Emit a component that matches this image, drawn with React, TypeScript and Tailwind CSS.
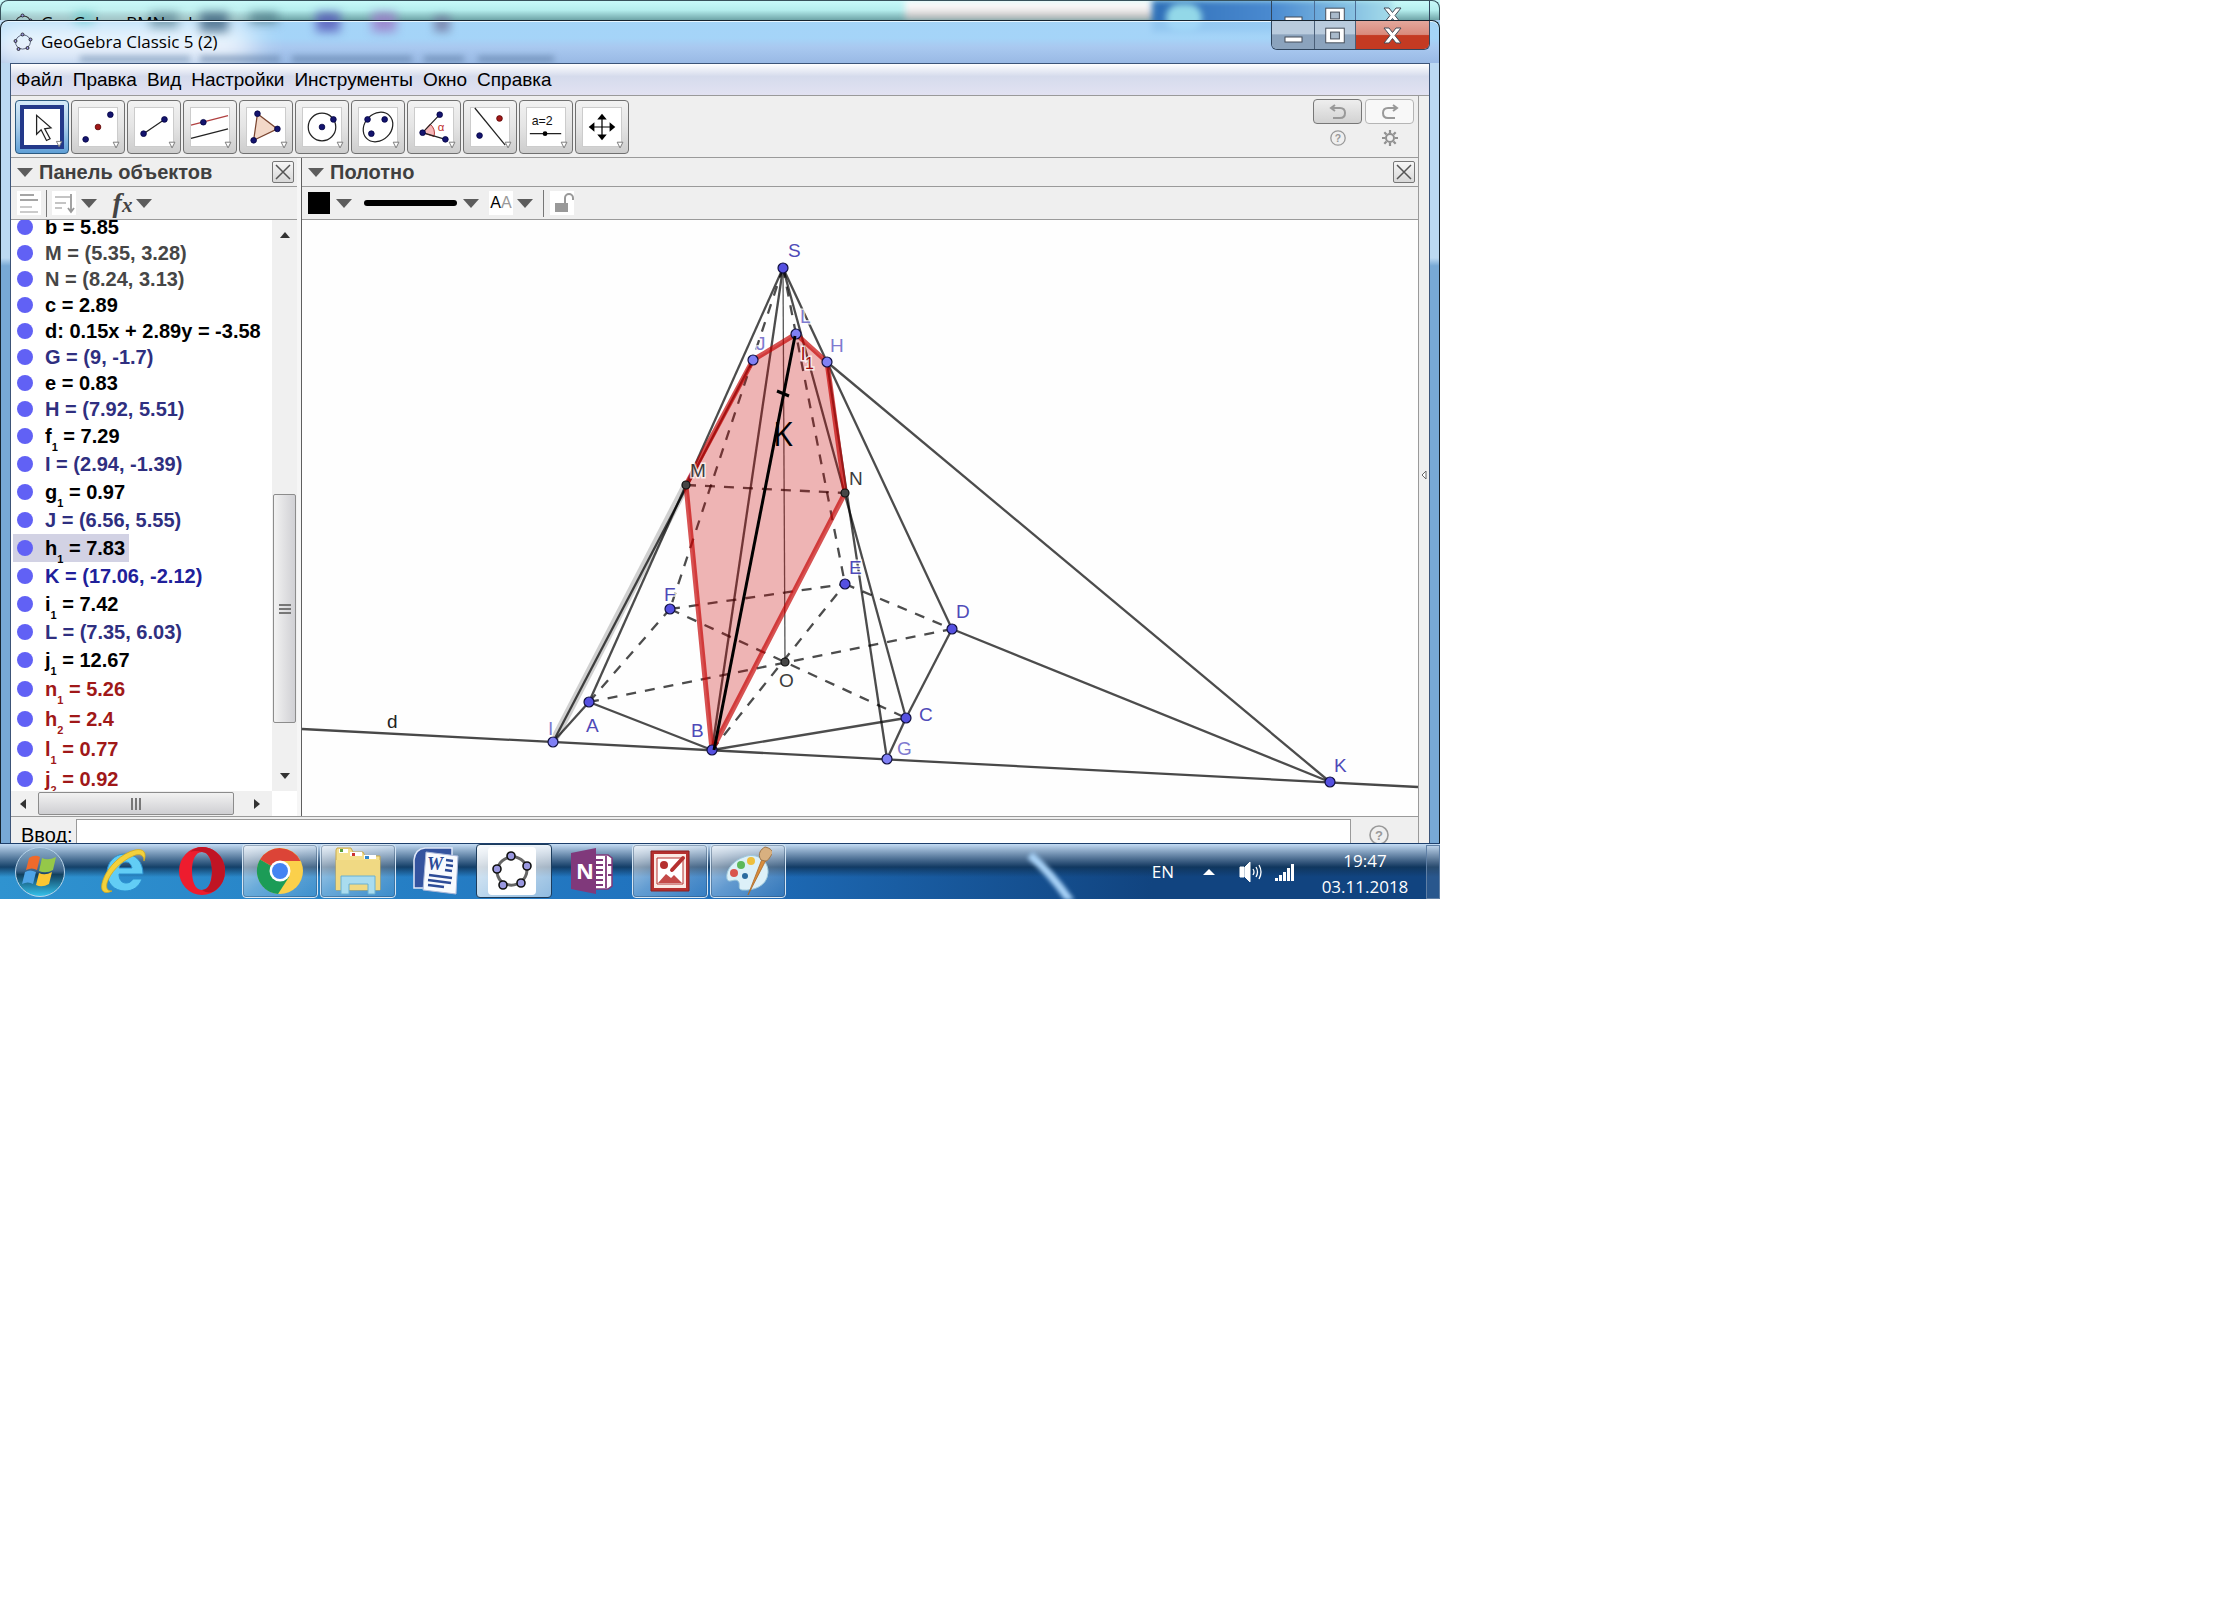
import React, { FC, ReactNode } from "react";

type Point = { name: string; x: number; y: number; lx: number; ly: number; kind: "free" | "path" | "dep" };
type Row = { name: string; sub?: string; value: string; color: string; selected?: boolean; size: string };

const NAVY = "#14146e";
const MENU = ["Файл", "Правка", "Вид", "Настройки", "Инструменты", "Окно", "Справка"];

const COLORS = {
    black: "text-black",
    gray: "text-[#464646]",
    blue: "text-[#2f2f80]",
    deep: "text-[#20209a]",
    red: "text-[#a01818]",
};

const SIZES = { short: "h-[26px]", sub: "h-[28px]", tall: "h-[30px]" };

const ROWS: Row[] = [
    { name: "b", value: " = 5.85", color: COLORS.black, size: SIZES.short },
    { name: "M", value: " = (5.35, 3.28)", color: COLORS.gray, size: SIZES.short },
    { name: "N", value: " = (8.24, 3.13)", color: COLORS.gray, size: SIZES.short },
    { name: "c", value: " = 2.89", color: COLORS.black, size: SIZES.short },
    { name: "d", value: ": 0.15x + 2.89y = -3.58", color: COLORS.black, size: SIZES.short },
    { name: "G", value: " = (9, -1.7)", color: COLORS.blue, size: SIZES.short },
    { name: "e", value: " = 0.83", color: COLORS.black, size: SIZES.short },
    { name: "H", value: " = (7.92, 5.51)", color: COLORS.blue, size: SIZES.short },
    { name: "f", sub: "1", value: " = 7.29", color: COLORS.black, size: SIZES.sub },
    { name: "I", value: " = (2.94, -1.39)", color: COLORS.blue, size: SIZES.sub },
    { name: "g", sub: "1", value: " = 0.97", color: COLORS.black, size: SIZES.sub },
    { name: "J", value: " = (6.56, 5.55)", color: COLORS.blue, size: SIZES.sub },
    { name: "h", sub: "1", value: " = 7.83", color: COLORS.black, size: SIZES.sub, selected: true },
    { name: "K", value: " = (17.06, -2.12)", color: COLORS.deep, size: SIZES.sub },
    { name: "i", sub: "1", value: " = 7.42", color: COLORS.black, size: SIZES.sub },
    { name: "L", value: " = (7.35, 6.03)", color: COLORS.blue, size: SIZES.sub },
    { name: "j", sub: "1", value: " = 12.67", color: COLORS.black, size: SIZES.sub },
    { name: "n", sub: "1", value: " = 5.26", color: COLORS.red, size: SIZES.tall },
    { name: "h", sub: "2", value: " = 2.4", color: COLORS.red, size: SIZES.tall },
    { name: "l", sub: "1", value: " = 0.77", color: COLORS.red, size: SIZES.tall },
    { name: "j", sub: "2", value: " = 0.92", color: COLORS.red, size: SIZES.tall },
];

const POINTS: Point[] = [
    { name: "S", x: 783, y: 268, lx: 788, ly: 257, kind: "free" },
    { name: "L", x: 796, y: 334, lx: 800, ly: 323, kind: "path" },
    { name: "J", x: 753, y: 360, lx: 756, ly: 350, kind: "path" },
    { name: "H", x: 827, y: 362, lx: 830, ly: 352, kind: "path" },
    { name: "M", x: 686, y: 485, lx: 690, ly: 477, kind: "dep" },
    { name: "N", x: 845, y: 493, lx: 849, ly: 485, kind: "dep" },
    { name: "F", x: 670, y: 609, lx: 664, ly: 601, kind: "free" },
    { name: "E", x: 845, y: 584, lx: 849, ly: 574, kind: "free" },
    { name: "D", x: 952, y: 629, lx: 956, ly: 618, kind: "free" },
    { name: "O", x: 785, y: 662, lx: 779, ly: 687, kind: "dep" },
    { name: "A", x: 589, y: 702, lx: 586, ly: 732, kind: "free" },
    { name: "I", x: 553, y: 742, lx: 548, ly: 735, kind: "path" },
    { name: "B", x: 712, y: 750, lx: 691, ly: 737, kind: "free" },
    { name: "C", x: 906, y: 718, lx: 919, ly: 721, kind: "free" },
    { name: "G", x: 887, y: 759, lx: 897, ly: 755, kind: "path" },
    { name: "K", x: 1330, y: 782, lx: 1334, ly: 772, kind: "free" },
];

const POINT_FILL = { free: "#5550e0", path: "#8080f5", dep: "#464646" };
const LABEL_FILL = { free: "#4f4ab8", path: "#7f7ad0", dep: "#3c3c3c" };

const SOLID = ["SA", "SB", "SC", "SD", "AB", "BC", "CD", "CG", "AI", "JI", "HG", "DK", "HK"];
const DASHED = ["SF", "SE", "FE", "ED", "AF", "AD", "BE", "FC", "MN"];

const at = (name: string) => POINTS.find((p) => p.name === name) as Point;

const Edge: FC<{ ends: string; dashed?: boolean }> = ({ ends, dashed }) => {
    const a = at(ends[0]);
    const b = at(ends[1]);
    return (
        <line
            x1={a.x}
            y1={a.y}
            x2={b.x}
            y2={b.y}
            stroke="#000"
            strokeOpacity="0.7"
            strokeWidth="2.3"
            strokeDasharray={dashed ? "10 9" : undefined}
        />
    );
};

const Construction: FC = () => (
    <svg viewBox="302 220 1116 596" className="block w-full bg-[#fefefe]" fontFamily="Liberation Sans, Arial, sans-serif">
        <line x1="302" y1="729" x2="1418" y2="787" stroke="#484848" strokeWidth="2.3" />
        <line x1="553" y1="742" x2="686" y2="485" stroke="#000" strokeOpacity="0.18" strokeWidth="8" />
        {SOLID.map((e) => (
            <Edge key={e} ends={e} />
        ))}
        <line x1="783" y1="268" x2="785" y2="662" stroke="#555" strokeWidth="1.3" />
        {DASHED.map((e) => (
            <Edge key={e} ends={e} dashed />
        ))}
        <polygon
            points="712,750 686,485 753,360 796,334 827,362 845,493"
            fill="#c80000"
            fillOpacity="0.29"
            stroke="#c40000"
            strokeOpacity="0.68"
            strokeWidth="5"
            strokeLinejoin="round"
        />
        {POINTS.map((p) => (
            <circle
                key={p.name}
                cx={p.x}
                cy={p.y}
                r={p.kind === "dep" ? 4 : 5}
                fill={POINT_FILL[p.kind]}
                stroke={p.kind === "dep" ? "#111" : "#101040"}
                strokeWidth="1.2"
            />
        ))}
        <g fontSize="19" stroke="#fff" strokeWidth="3" strokeOpacity="0.75" paintOrder="stroke">
            {POINTS.map((p) => (
                <text key={p.name} x={p.lx} y={p.ly} fill={LABEL_FILL[p.kind]}>
                    {p.name}
                </text>
            ))}
            <text x="387" y="728" fill="#222">
                d
            </text>
            <text x="801" y="360" fill="#a01010">
                l
            </text>
            <text x="805" y="369" fill="#a01010" fontSize="16">
                1
            </text>
        </g>
        <g stroke="#000" strokeWidth="3">
            <path d="M795 336 L714 750" />
            <path d="M777 391 L789 396" />
        </g>
        <text x="773" y="446" fontSize="32" fontFamily="Open Sans, sans-serif">
            K
        </text>
    </svg>
);

const Dot: FC<{ x: number; y: number; red?: boolean }> = ({ x, y, red }) => (
    <circle cx={x} cy={y} r="3" fill={red ? "#a01818" : NAVY} stroke={red ? "#500" : "#000040"} strokeWidth="0.8" />
);

const TOOLS: { label: string; icon: ReactNode }[] = [
    {
        label: "Перемещать",
        icon: <path d="M14 7v21l5-5 6 12 4-2-6-11 7-1z" fill="#fff" stroke="#222" strokeWidth="1.4" />,
    },
    {
        label: "Точка",
        icon: (
            <>
                <Dot x={7} y={33} />
                <Dot x={20} y={20} red />
                <Dot x={33} y={7} />
            </>
        ),
    },
    {
        label: "Отрезок",
        icon: (
            <>
                <path d="M9 27 31 12" stroke="#222" strokeWidth="1.3" />
                <Dot x={9} y={27} />
                <Dot x={31} y={12} />
            </>
        ),
    },
    {
        label: "Параллельная прямая",
        icon: (
            <>
                <path d="M0 18 39 8" stroke="#b04040" strokeWidth="1.3" />
                <path d="M0 32 39 22" stroke="#222" strokeWidth="1.3" />
                <Dot x={13} y={15} />
            </>
        ),
    },
    {
        label: "Многоугольник",
        icon: (
            <>
                <path d="M11 6 32 22 7 34z" fill="#f3d8c8" stroke="#7a4530" strokeWidth="1.3" />
                <Dot x={11} y={6} />
                <Dot x={32} y={22} />
                <Dot x={7} y={34} />
            </>
        ),
    },
    {
        label: "Окружность",
        icon: (
            <>
                <circle cx="20" cy="20" r="14.5" fill="none" stroke="#222" strokeWidth="1.3" />
                <Dot x={20} y={20} />
                <Dot x={32} y={12} />
            </>
        ),
    },
    {
        label: "Эллипс",
        icon: (
            <>
                <ellipse cx="20" cy="20" rx="17" ry="14" fill="none" stroke="#222" strokeWidth="1.3" transform="rotate(-45 20 20)" />
                <Dot x={9} y={12} />
                <Dot x={27} y={12} />
                <Dot x={13} y={27} />
            </>
        ),
    },
    {
        label: "Угол",
        icon: (
            <>
                <path d="M8 26 16 17A13 13 0 0 1 20 30z" fill="#f7b8b8" stroke="#b03030" />
                <path d="M26 7 8 26 32 33" fill="none" stroke="#222" strokeWidth="1.3" />
                <text x="24" y="24" fontSize="12" fill="#c03030">
                    α
                </text>
                <Dot x={26} y={7} />
                <Dot x={8} y={26} />
                <Dot x={32} y={33} />
            </>
        ),
    },
    {
        label: "Отражение",
        icon: (
            <>
                <path d="M4 0 36 39" stroke="#222" strokeWidth="1.3" />
                <Dot x={30} y={11} red />
                <Dot x={9} y={29} />
            </>
        ),
    },
    {
        label: "Ползунок",
        icon: (
            <>
                <text x="5" y="18" fontSize="13" fill="#111">
                    a=2
                </text>
                <path d="M3 27H36" stroke="#222" strokeWidth="1.3" />
                <circle cx="19" cy="27" r="2.5" />
            </>
        ),
    },
    {
        label: "Переместить чертёж",
        icon: (
            <>
                <path d="M20 10V30M10 20H30" stroke="#000" strokeWidth="1.3" />
                <path d="M20 6l5 6H15zM20 34l5-6H15zM6 20l6-5v10zM34 20l-6-5v10z" />
            </>
        ),
    },
];

const Tool: FC<{ label: string; icon: ReactNode; active?: boolean }> = ({ label, icon, active }) => (
    <button
        aria-label={label}
        className={
            active
                ? "flex h-[54px] w-[54px] items-center justify-center rounded border border-[#2c5a80] bg-linear-to-b from-[#d6eaf8] via-[#a8cdea] to-[#5f9fd6]"
                : "flex h-[54px] w-[54px] items-center justify-center rounded border border-[#707070] bg-linear-to-b from-[#f2f2f2] via-[#e4e4e4] to-[#cdcdcd]"
        }
    >
        <svg
            viewBox="0 0 40 40"
            className={active ? "h-11 w-11 overflow-visible border-4 border-[#23398a] bg-white" : "h-10 w-10 overflow-visible border border-[#ccc] bg-white"}
            fontFamily="Liberation Sans, sans-serif"
        >
            {icon}
            <path d="M36 36H42L39 42z" fill="#fff" stroke="#777" />
        </svg>
    </button>
);

const Caret: FC = () => (
    <svg viewBox="0 0 16 9" className="h-[9px] w-4 shrink-0" fill="#5c5c5c">
        <path d="M0 0h16L8 9z" />
    </svg>
);

const CloseView: FC = () => (
    <button aria-label="Закрыть" className="h-[22px] w-[22px] rounded-xs border border-[#777] bg-linear-to-b from-[#f6f6f6] to-[#d8d8d8]">
        <svg viewBox="0 0 20 20" className="h-5 w-5" stroke="#555" strokeWidth="1.5">
            <path d="M3 3 17 17M17 3 3 17" />
        </svg>
    </button>
);

const ViewHeader: FC<{ title: string }> = ({ title }) => (
    <header className="flex h-[29px] items-center justify-between border-b border-[#9a9a9a] pr-[3px] pl-1.5">
        <div className="flex items-center gap-1.5">
            <Caret />
            <h2 className="text-[20px] leading-6 font-bold text-[#404040]">{title}</h2>
        </div>
        <CloseView />
    </header>
);

const Pentagon: FC<{ className: string; stroke: string; width: number; r: number }> = ({ className, stroke, width, r }) => (
    <svg viewBox="0 0 40 40" className={className}>
        <ellipse cx="20" cy="20" rx="15" ry="14" fill="none" stroke={stroke} strokeWidth={width} transform="rotate(-20 20 20)" />
        {[
            [19, 5],
            [35, 15],
            [29, 32],
            [11, 34],
            [5, 18],
        ].map(([x, y]) => (
            <circle key={x} cx={x} cy={y} r={r} fill="#9a98e0" stroke="#111" strokeWidth="1.6" />
        ))}
    </svg>
);

const Caption: FC<{ ghost?: boolean }> = ({ ghost }) => (
    <div className="flex h-[29px] overflow-hidden rounded-b-md border border-t-0 border-[#30465e] text-white">
        <button
            aria-label="Свернуть"
            className={ghost ? "w-[43px] border-r border-[#4d6f98]" : "w-[43px] border-r border-[#4a5f78] bg-linear-to-b from-[#b9cbdd] from-45% to-[#8ba3bd] to-50%"}
        >
            <svg viewBox="0 0 43 29" className="h-[29px] w-[43px]">
                <rect x="13" y="16" width="17" height="5" fill="#fff" stroke="#444c58" />
            </svg>
        </button>
        <button
            aria-label="Развернуть"
            className={ghost ? "w-[41px] border-r border-[#4d6f98]" : "w-[41px] border-r border-[#4a5f78] bg-linear-to-b from-[#b9cbdd] from-45% to-[#8ba3bd] to-50%"}
        >
            <svg viewBox="0 0 41 29" className="h-[29px] w-10" stroke="#444c58">
                <rect x="11" y="7" width="19" height="15" fill="#fff" />
                <rect x="16" y="11" width="9" height="7" fill="#a9bacb" />
            </svg>
        </button>
        <button
            aria-label="Закрыть окно"
            className={ghost ? "w-[73px]" : "w-[73px] bg-linear-to-b from-[#e3a79c] via-[#d98a7c] via-48% to-[#c43a22] to-52%"}
        >
            <svg viewBox="0 0 73 29" className="h-[29px] w-[73px]">
                <path d="M28 7h5l3.500 4.500L40 7h5l-6 7.500 6 7.500h-5l-3.500-4.500L33 22h-5l6-7.500z" fill="#fff" stroke="#444c58" />
            </svg>
        </button>
    </div>
);

/* glass glow of the windows underneath */
const Glass: FC = () => (
    <div aria-hidden className="pointer-events-none absolute inset-x-0 top-0 h-16 overflow-hidden">
        <div className="absolute inset-x-0 top-0 h-5 bg-linear-to-b from-[#c9fbfb] via-[#b5eeee] to-[#6fa5a8]" />
        <div className="absolute top-0 left-[905px] h-5 w-[250px] bg-linear-to-b from-white via-[#f4f2f2] to-[#a5a5a5] blur-[3px]" />
        <div className="absolute top-0 left-[1152px] h-8 w-[240px] bg-linear-to-r from-[#2f6fb8] via-[#4a8ad0] to-[#a5dcea] blur-[3px]" />
        <div className="absolute top-1 left-[1166px] h-7 w-9 rounded-full bg-[#93d8e8] blur-[3px]" />
        <div className="absolute inset-x-0 top-[21px] h-[43px] bg-linear-to-b from-[#a4d6fa]/85 from-40% via-[#a9c9f0] via-60% to-[#98b8e4]" />
        <div className="absolute top-6 -left-2 h-10 w-[260px] bg-white/90 blur-lg" />
        <div className="absolute top-3 left-[74px] h-3 w-5 bg-[#5fc8cc]/60 blur-[5px]" />
        <div className="absolute top-3 left-[150px] h-4 w-7 bg-[#4f7888]/60 blur-[5px]" />
        <div className="absolute top-3 left-[200px] h-5 w-7 bg-[#2f5573]/70 blur-[5px]" />
        <div className="absolute top-3 left-[250px] h-3 w-7 bg-[#3f6a7a]/60 blur-[5px]" />
        <div className="absolute top-3 left-[316px] h-5 w-6 bg-[#5558b8]/80 blur-[5px]" />
        <div className="absolute top-3 left-[372px] h-5 w-6 bg-[#9a7cc8]/80 blur-[5px]" />
        <div className="absolute top-4 left-[434px] h-4 w-4 bg-[#6d6f98]/70 blur-[4px]" />
        <div className="absolute top-[56px] left-[80px] h-1.5 w-[110px] bg-[#56779d]/50 blur-[3px]" />
        <div className="absolute top-[56px] left-[200px] h-1.5 w-20 bg-[#56779d]/60 blur-[3px]" />
        <div className="absolute top-[56px] left-[292px] h-1.5 w-[120px] bg-[#56779d]/60 blur-[3px]" />
        <div className="absolute top-[56px] left-[424px] h-1.5 w-10 bg-[#56779d]/60 blur-[3px]" />
        <div className="absolute top-[56px] left-[478px] h-1.5 w-[76px] bg-[#56779d]/60 blur-[3px]" />
    </div>
);

const ObjectsPanel: FC = () => (
    <aside className="flex w-[286px] shrink-0 flex-col">
        <ViewHeader title="Панель объектов" />
        <div className="flex h-[33px] items-center border-b border-[#9a9a9a] pl-1.5">
            <button aria-label="Вспомогательные объекты" className="bg-white">
                <svg viewBox="0 0 24 24" className="h-6 w-6" strokeWidth="1.6">
                    <path d="M3 4h14M3 9h18" stroke="#888" />
                    <path d="M3 16h12M3 21h18" stroke="#bbb" />
                </svg>
            </button>
            <span className="mx-[5px] h-[27px] w-px bg-[#777]" />
            <button aria-label="Сортировать" className="flex items-center gap-[5px]">
                <svg viewBox="0 0 24 24" className="h-6 w-6 bg-white" fill="none" strokeWidth="1.8">
                    <path d="M3 6h15M3 12h11M3 17h7" stroke="#c4c4c4" />
                    <path d="M19 3v17M16 17l3 4 3-4" stroke="#999" />
                </svg>
                <Caret />
            </button>
            <button aria-label="Описание" className="ml-3 flex items-center">
                <span className="w-[27px] text-[28px] leading-6 font-bold text-[#444] italic font-['Liberation_Serif',serif]">
                    f<sub className="bottom-0 text-[21px]">x</sub>
                </span>
                <Caret />
            </button>
        </div>
        <div className="flex h-0 grow bg-white">
            <ul className="-mt-1.5 h-[calc(100%+6px)] grow overflow-hidden [clip-path:inset(6px_0_0_0)]">
                {ROWS.map((row) => (
                    <li key={row.name + (row.sub ?? "")} className={`flex ${row.size}`}>
                        <div className={`ml-0.5 flex items-center gap-3 pr-1 pl-1 ${row.color} ${row.selected ? "bg-[#d2d2e4]" : ""}`}>
                            <span className="h-4 w-4 rounded-full bg-[#6161f5]" />
                            <span className="text-[20px] leading-6 font-bold whitespace-pre">
                                {row.name}
                                {row.sub && <sub className="-bottom-2 text-[11px]">{row.sub}</sub>}
                                {row.value}
                            </span>
                        </div>
                    </li>
                ))}
            </ul>
            <div className="flex w-[25px] flex-col items-center bg-[#f0f0f0] pt-3">
                <svg viewBox="0 0 10 6" className="h-1.5 w-2.5" fill="#333">
                    <path d="M0 6h10L5 0z" />
                </svg>
                <div className="mt-auto flex h-[229px] w-[23px] flex-col items-center justify-center gap-0.5 rounded-xs border border-[#8c8c8c] bg-linear-to-r from-[#f2f2f2] to-[#d0d0d4]">
                    <span className="h-0.5 w-3 bg-[#777]" />
                    <span className="h-0.5 w-3 bg-[#777]" />
                    <span className="h-0.5 w-3 bg-[#777]" />
                </div>
                <svg viewBox="0 0 10 6" className="mt-[50px] mb-3 h-1.5 w-2.5" fill="#333">
                    <path d="M0 0h10L5 6z" />
                </svg>
            </div>
        </div>
        <div className="flex h-[25px] bg-white">
            <div className="flex grow items-center bg-[#f0f0f0] pl-[9px]">
                <svg viewBox="0 0 6 10" className="h-2.5 w-1.5" fill="#333">
                    <path d="M6 0v10L0 5z" />
                </svg>
                <div className="ml-3 flex h-[23px] w-[196px] items-center justify-center gap-0.5 rounded-xs border border-[#8c8c8c] bg-linear-to-b from-[#f2f2f2] to-[#cfcfd2]">
                    <span className="h-3 w-0.5 bg-[#777]" />
                    <span className="h-3 w-0.5 bg-[#777]" />
                    <span className="h-3 w-0.5 bg-[#777]" />
                </div>
                <svg viewBox="0 0 6 10" className="ml-5 h-2.5 w-1.5" fill="#333">
                    <path d="M0 0v10l6-5z" />
                </svg>
            </div>
            <div className="w-[25px]" />
        </div>
    </aside>
);

const CanvasPanel: FC = () => (
    <section className="min-w-0 grow">
        <ViewHeader title="Полотно" />
        <div className="flex h-[33px] items-center border-b border-[#9a9a9a] pl-1.5">
            <button aria-label="Цвет" className="flex items-center gap-1.5">
                <span className="h-[22px] w-[22px] bg-black" />
                <Caret />
            </button>
            <button aria-label="Стиль линии" className="ml-3 flex items-center gap-1.5">
                <span className="h-1.5 w-[93px] rounded-full bg-black" />
                <Caret />
            </button>
            <button aria-label="Размер текста" className="ml-2.5 flex items-center gap-1 text-[17px] leading-6">
                <span className="flex h-6 w-6 items-center justify-center bg-white text-[16px]">
                    <span>A</span>
                    <span className="text-[#999]">A</span>
                </span>
                <Caret />
            </button>
            <span className="mr-1.5 ml-2.5 h-[27px] w-px bg-[#777]" />
            <button aria-label="Закрепить" className="bg-white">
                <svg viewBox="0 0 24 24" className="h-6 w-6">
                    <rect x="5" y="12" width="13" height="9" fill="#999" />
                    <path d="M15 12V7a4 4 0 0 1 8 0v2" fill="none" stroke="#999" strokeWidth="2" />
                </svg>
            </button>
        </div>
        <Construction />
    </section>
);

const HelpMark: FC<{ className: string }> = ({ className }) => (
    <svg viewBox="0 0 20 20" className={className}>
        <circle cx="10" cy="10" r="9" fill="none" stroke="#999" strokeWidth="1.6" />
        <text x="10" y="15" fontSize="13" fontWeight="bold" textAnchor="middle" fill="#999" fontFamily="Liberation Sans, sans-serif">
            ?
        </text>
    </svg>
);

const APPS: { label: string; open?: boolean; current?: boolean; icon: ReactNode }[] = [
    {
        label: "Internet Explorer",
        icon: (
            <svg viewBox="0 0 48 48" className="h-12 w-12" fill="none">
                <path
                    d="M43 27H19c0 6 3 9 7 9 3 0 5-1 7-4h9c-3 8-9 12-17 12C14 44 7 36 7 26S14 7 25 7s18 8 18 20zM19 21h13c-1-4-3-6-6-6s-6 2-7 6z"
                    fill="#62cdf5"
                    stroke="#2b8fcf"
                    fillRule="evenodd"
                />
                <path
                    d="M12 44C4 48-1 44 3 33 8 19 22 6 35 3c9-2 12 3 9 11 0-6-4-8-11-5C21 14 10 26 7 36c-1 5 0 8 5 8z"
                    fill="#f3d13c"
                    stroke="#d3a81c"
                    strokeWidth="0.8"
                />
            </svg>
        ),
    },
    {
        label: "Opera",
        icon: (
            <svg viewBox="0 0 48 50" className="h-[50px] w-12">
                <path d="M24 1a23 24 0 1 0 0 48 23 24 0 1 0 0-48zm0 5c7 0 10 9 10 19s-3 19-10 19-10-9-10-19S17 6 24 6z" fill="#ee1c2e" fillRule="evenodd" />
                <path d="M24 1c-5 0-9 2-12 5q5-2 12 0c7 0 10 9 10 19s-3 19-10 19q7 5 14 0 9-7 9-19T38 6q-6-5-14-5z" fill="#c01424" />
            </svg>
        ),
    },
    {
        label: "Google Chrome",
        open: true,
        icon: (
            <svg viewBox="0 0 48 48" className="h-12 w-12">
                <circle cx="24" cy="24" r="23" fill="#fbd04b" />
                <path d="M24 24 4 12.500A23 23 0 0 1 44.500 14z" fill="#dc4437" />
                <path d="M24 24 4 12.500A23 23 0 0 0 22 47l11-17z" fill="#1c9c57" />
                <path d="M24 14H44.500L40 30 24 24z" fill="#fbd04b" />
                <circle cx="24" cy="24" r="10.500" fill="#fff" />
                <circle cx="24" cy="24" r="8" fill="#4484f3" />
            </svg>
        ),
    },
    {
        label: "Проводник",
        open: true,
        icon: (
            <svg viewBox="0 0 48 50" className="h-[50px] w-12">
                <path d="M3 2h14l2 4h10l2 4h15v34H2V4z" fill="#f4e08e" stroke="#c9a94d" />
                <path d="M5 3h9v4H5z" fill="#fff" />
                <path d="M16 6h12v4H16zM30 9h12v4H30z" fill="#fff" />
                <path d="M6 3h3v3H6z" fill="#5aa03c" />
                <path d="M18 7h3v3h-3z" fill="#c33" />
                <path d="M31 10h4v3h-4z" fill="#38c" />
                <path d="M2 14h44v30H2z" fill="#f0d983" />
                <path d="M7 30h34v18h-7V38H15v10H7z" fill="#a9dcef" stroke="#6bb0d0" />
            </svg>
        ),
    },
    {
        label: "Microsoft Word",
        icon: (
            <svg viewBox="0 0 48 50" className="h-[50px] w-12">
                <path d="M2 42V14Q3 3 13 2h27v40z" fill="#33539f" stroke="#dfe8f8" strokeWidth="1.5" />
                <path d="M14 6 46 10 44 48 11 44z" fill="#f8fafe" stroke="#a9b8da" />
                <text x="15" y="24" fontSize="18" fontWeight="bold" fontStyle="italic" fill="#2c4b97" fontFamily="Liberation Serif, serif">
                    W
                </text>
                <path d="M34 14l7 1M34 19l7 1M33 24l7 1M17 29l23 3M16 34l23 3M16 39l16 2" stroke="#2c4b97" strokeWidth="2.500" />
            </svg>
        ),
    },
    {
        label: "GeoGebra",
        open: true,
        current: true,
        icon: (
            <span className="flex h-12 w-12 items-center justify-center rounded-sm bg-white">
                <Pentagon className="h-10 w-10" stroke="#666" width={3} r={4} />
            </span>
        ),
    },
    {
        label: "OneNote",
        icon: (
            <svg viewBox="0 0 44 48" className="h-12 w-11">
                <path d="M24 8h14l4 3v28l-4 3H24z" fill="#fff" stroke="#80397b" strokeWidth="1.5" />
                <path d="M25 13h8M25 18h8M25 23h8M25 28h8M25 33h8M25 38h8M38 18h4M38 28h4M36 9v32" stroke="#80397b" strokeWidth="1.800" />
                <path d="M1 6 26 1v46L1 42z" fill="#80397b" />
                <text x="6" y="32" fontSize="22" fontWeight="bold" fill="#fff" fontFamily="Open Sans, sans-serif">
                    N
                </text>
            </svg>
        ),
    },
    {
        label: "Picture Manager",
        open: true,
        icon: (
            <svg viewBox="0 0 40 42" className="h-[42px] w-10">
                <path d="M1 1h38v40H1z" fill="#b5302f" stroke="#8d1f20" />
                <path d="M4 4h32v34H4z" fill="#fbe9e4" />
                <path d="M7 8h26v26H7z" fill="#fff" stroke="#b5302f" />
                <circle cx="14" cy="15" r="4" fill="#b5302f" />
                <path d="M22 20 33 8" stroke="#b5302f" strokeWidth="4" strokeLinecap="round" />
                <path d="M8 33l8-9 5 4 3-3 8 8z" fill="#c44a48" />
            </svg>
        ),
    },
    {
        label: "Paint",
        open: true,
        icon: (
            <svg viewBox="0 0 48 50" className="h-[50px] w-12">
                <path d="M20 11C32 6 45 14 44 27 43 40 30 45 18 44c-5-1-1-6-4-9-4-3-9 3-11-2C1 24 10 14 20 11z" fill="#dcf0f8" stroke="#9cc8dc" />
                <circle cx="10" cy="27" r="4" fill="#d9544d" />
                <circle cx="17" cy="19" r="4" fill="#5cb85a" />
                <circle cx="27" cy="15" r="4" fill="#eebf3d" />
                <circle cx="21" cy="30" r="3" fill="#2b6b9f" />
                <path d="M24 49 38 13l4 1z" fill="#d98d3c" stroke="#a8682a" strokeWidth="0.800" />
                <path d="M37 14c-4-6 0-11 4-13 6 1 8 5 8 6-3 3-4 8-8 8z" fill="#d8b080" stroke="#9c7448" />
            </svg>
        ),
    },
];

const Taskbar: FC = () => (
    <footer className="relative flex h-14 overflow-hidden border-t border-[#1d3f6c] bg-linear-to-r from-[#2f93d0] via-[#1f6fbc] via-50% to-[#114480] to-80% text-white font-['Open_Sans',sans-serif]">
        <div aria-hidden className="absolute inset-0 bg-linear-to-b from-[#c4dcf4] via-[#103458]/85 via-42% to-transparent to-60%" />
        <svg aria-hidden viewBox="0 0 60 56" className="absolute left-[1022px] h-14 w-[60px] blur-[2px]">
            <path d="M8 11Q28 28 49 58" fill="none" stroke="#a9d3f8" strokeWidth="8" />
        </svg>
        <button aria-label="Пуск" className="relative flex w-[86px] shrink-0 items-center pl-[14px]">
            <svg viewBox="0 0 52 52" className="h-[52px] w-[52px]">
                <defs>
                    <linearGradient id="orb" x2="0" y2="1">
                        <stop offset="0" stopColor="#8fb0cc" />
                        <stop offset="0.48" stopColor="#3a6288" />
                        <stop offset="0.55" stopColor="#12405f" />
                        <stop offset="1" stopColor="#35c4ee" />
                    </linearGradient>
                </defs>
                <circle cx="26" cy="26" r="24.500" fill="url(#orb)" stroke="#b8d4ea" />
                <path d="M15 12q6-4 11-1l-3 13q-5-3-11 0z" fill="#ef6a2c" />
                <path d="M28 12q6 3 14-1l-3 13q-7 4-14 1z" fill="#95c849" />
                <path d="M11 26q5-3 11 0l-3 12q-5-3-11 0z" fill="#4ea4e6" />
                <path d="M25 27q6 3 13-1l-3 12q-7 4-13 1z" fill="#fbc733" />
            </svg>
        </button>
        <nav className="relative flex gap-0.5">
            {APPS.map((app) => (
                <button
                    key={app.label}
                    aria-label={app.label}
                    className={`flex h-[54px] w-[76px] items-center justify-center ${
                        app.current
                            ? "rounded-sm border border-[#1c3c5c] bg-linear-to-br from-white/90 to-white/50 pr-1"
                            : app.open
                              ? "rounded-sm border border-[#d5e6f5] bg-linear-to-br from-white/70 via-white/30 to-white/10 outline -outline-offset-2 outline-[#26456a]/40"
                              : ""
                    }`}
                >
                    {app.icon}
                </button>
            ))}
        </nav>
        <div className="relative ml-auto flex items-center">
            <button className="text-[17px] leading-6">EN</button>
            <button aria-label="Скрытые значки" className="ml-[29px]">
                <svg viewBox="0 0 12 6" className="h-1.5 w-3" fill="#fff">
                    <path d="M0 6h12L6 0z" />
                </svg>
            </button>
            <button aria-label="Громкость" className="ml-6">
                <svg viewBox="0 0 24 22" className="h-[22px] w-6" fill="none" stroke="#fff">
                    <path d="M1 6h4v10H1zM6 6l5-5v20l-5-5z" fill="#fff" />
                    <path d="M14 8q2 3 0 6M17 6q3 5 0 10M20 4q4 7 0 14" strokeWidth="1.300" />
                </svg>
            </button>
            <button aria-label="Сеть" className="ml-3">
                <svg viewBox="0 0 20 18" className="h-[18px] w-5" fill="#fff">
                    <path d="M0 15h3v3H0zM4 12h3v6H4zM8 9h3v9H8zM12 5h3v13h-3zM16 1h3v17h-3z" />
                </svg>
            </button>
            <div className="ml-6 w-[92px] pt-1 text-center text-[17px] leading-[26px]">
                <time className="block">19:47</time>
                <time className="block">03.11.2018</time>
            </div>
            <button aria-label="Показать рабочий стол" className="ml-[15px] h-[54px] w-[14px] border border-[#5f7fa5] bg-white/10" />
        </div>
    </footer>
);

const App: FC = () => (
    <main className="min-h-screen bg-white font-['Liberation_Sans',Arial,sans-serif] text-black">
        <div className="relative max-w-[1440px] overflow-hidden bg-[#a9c9ec]">
            <Glass />
            <div className="relative flex h-5 items-start justify-between overflow-hidden rounded-t-lg border border-b-0 border-[#38525c] pr-[9px] pl-3 font-['Open_Sans',sans-serif]">
                <div className="flex items-center gap-2 pt-2.5">
                    <Pentagon className="h-5 w-5" stroke="#333" width={2} r={3} />
                    <span className="text-[17px] leading-6">GeoGebra BMN.ggb</span>
                </div>
                <Caption ghost />
            </div>
            <div className="relative rounded-t-lg border border-b-0 border-[#16232e] shadow-[inset_0_1px_0_#e8f6ff]">
                <header className="flex h-[42px] items-start justify-between pr-[9px] pl-3 font-['Open_Sans',sans-serif]">
                    <div className="flex h-[42px] items-center gap-2">
                        <Pentagon className="h-5 w-5" stroke="#444c66" width={1.5} r={3} />
                        <h1 className="text-[17px] leading-6">GeoGebra Classic 5 (2)</h1>
                    </div>
                    <Caption />
                </header>
                <div className="bg-linear-to-b from-[#bcd9f2] from-25% to-[#78a9d6] to-26% pr-[9px] pl-[9px]">
                    <div className="border border-b-0 border-[#3c5478] bg-[#efefef]">
                        <nav className="flex h-8 items-center gap-2.5 border-b border-[#9a9a9a] bg-linear-to-b from-white via-[#d5dbec] via-40% to-[#e2e2f2] pl-[5px]">
                            {MENU.map((item) => (
                                <button key={item} className="text-[19px] leading-6">
                                    {item}
                                </button>
                            ))}
                        </nav>
                        <div className="flex">
                            <div className="min-w-0 grow border-r border-[#9a9a9a]">
                                <div className="flex h-[62px] items-start justify-between border-b border-[#9a9a9a] pt-1 pr-1 pl-1">
                                    <div className="flex gap-0.5">
                                        {TOOLS.map((tool, i) => (
                                            <Tool key={tool.label} {...tool} active={i === 0} />
                                        ))}
                                    </div>
                                    <div className="-mt-px grid grid-cols-2 justify-items-center gap-x-[3px] gap-y-1.5">
                                        <button aria-label="Отменить" className="flex h-[25px] w-[49px] items-center justify-center rounded-sm border border-[#777] bg-linear-to-b from-[#eee] to-[#d2d2d2]">
                                            <svg viewBox="0 0 18 16" className="h-4 w-[18px]" fill="none" stroke="#999" strokeWidth="2">
                                                <path d="M2 4h9q5 0 5 5t-5 5H4M6 1 2 4l4 3" />
                                            </svg>
                                        </button>
                                        <button aria-label="Повторить" className="flex h-[25px] w-[49px] items-center justify-center rounded-sm border border-[#b5b5b5] bg-[#f8f8f8]">
                                            <svg viewBox="0 0 18 16" className="h-4 w-[18px]" fill="none" stroke="#999" strokeWidth="2">
                                                <path d="M16 4H7Q2 4 2 9t5 5h7M12 1l4 3-4 3" />
                                            </svg>
                                        </button>
                                        <HelpMark className="h-4 w-4" />
                                        <svg viewBox="0 0 16 16" className="h-4 w-4" fill="none" stroke="#909090">
                                            <circle cx="8" cy="8" r="4" strokeWidth="2" />
                                            <path d="M8 0v3M8 13v3M0 8h3M13 8h3M2.300 2.300l2.200 2.200M11.500 11.500l2.200 2.200M2.300 13.700l2.200-2.200M11.500 4.500l2.200-2.200" strokeWidth="2.200" />
                                        </svg>
                                    </div>
                                </div>
                                <div className="flex">
                                    <ObjectsPanel />
                                    <div className="w-[5px] shrink-0 border-r border-[#5f5f5f] bg-[#f6f6f6]" />
                                    <CanvasPanel />
                                </div>
                                <div className="flex h-[27px] items-start overflow-hidden border-t border-[#9a9a9a] pt-0.5">
                                    <label htmlFor="command" className="w-[65px] pt-1 pl-2.5 text-[20px] leading-6">
                                        Ввод:
                                    </label>
                                    <input id="command" className="h-9 min-w-0 grow border border-[#9a9a9a] bg-white px-2 text-[20px]" />
                                    <button aria-label="Справка по вводу" className="w-[67px] pt-1.5 pl-[18px]">
                                        <HelpMark className="h-5 w-5" />
                                    </button>
                                </div>
                            </div>
                            <div className="flex w-2.5 justify-center pt-[374px]">
                                <svg viewBox="0 0 6 10" className="h-2.5 w-1.5" fill="#fff" stroke="#666">
                                    <path d="M5 1v8L1 5z" />
                                </svg>
                            </div>
                        </div>
                    </div>
                </div>
            </div>
            <Taskbar />
        </div>
    </main>
);

App.displayName = "App";
export default App;
